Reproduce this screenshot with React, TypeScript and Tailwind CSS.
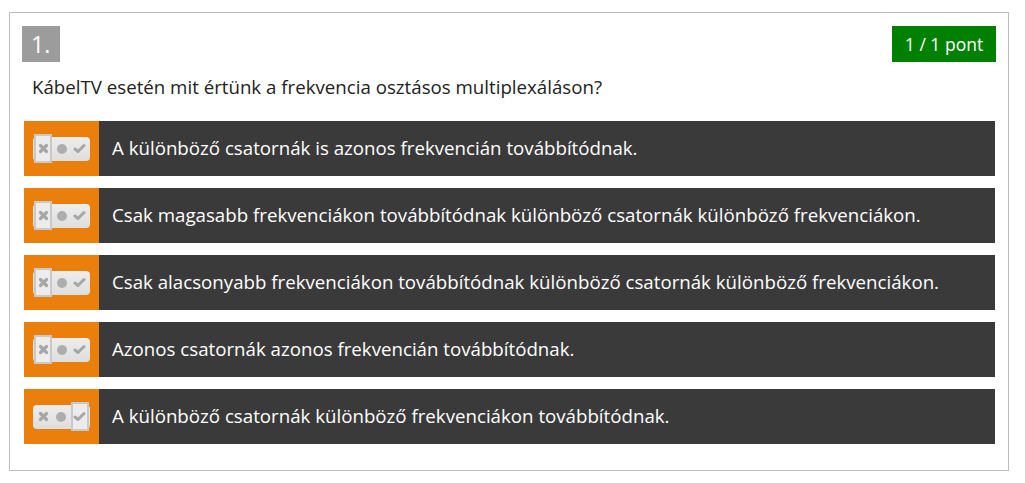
import React from 'react';

const answers = [
  { text: 'A különböző csatornák is azonos frekvencián továbbítódnak.', state: 'wrong' },
  { text: 'Csak magasabb frekvenciákon továbbítódnak különböző csatornák különböző frekvenciákon.', state: 'wrong' },
  { text: 'Csak alacsonyabb frekvenciákon továbbítódnak különböző csatornák különböző frekvenciákon.', state: 'wrong' },
  { text: 'Azonos csatornák azonos frekvencián továbbítódnak.', state: 'wrong' },
  { text: 'A különböző csatornák különböző frekvenciákon továbbítódnak.', state: 'right' },
];

const Cross = () => (
  <svg width="11" height="11" viewBox="0 0 11 11">
    <path d="M2.5 2.5 L8.5 8.5 M8.5 2.5 L2.5 8.5" stroke="#a6a6a6" strokeWidth="3.2" strokeLinecap="round" />
  </svg>
);

const Dot = () => <div className="w-[10px] h-[10px] rounded-full bg-[#adadad]" />;

const Check = () => (
  <svg width="13" height="11" viewBox="0 0 13 11">
    <path d="M2 6 L5 8.5 L11 2.5" stroke="#a6a6a6" strokeWidth="3" strokeLinecap="round" strokeLinejoin="round" fill="none" />
  </svg>
);

const Toggle: React.FC<{ state: string }> = ({ state }) => {
  const seg = (active: boolean, child: React.ReactNode) => (
    <div
      className={`w-[19px] flex items-center justify-center ${
        active ? 'h-[29px] border-2 border-[#c9c9c9] bg-[#ececec]' : 'h-[24px]'
      }`}
    >
      {child}
    </div>
  );
  return (
    <div className="relative w-[57px] h-[24px] rounded-[4px] bg-gradient-to-b from-[#ededed] to-[#dedede] flex items-center px-[1px]">
      {seg(state === 'wrong', <Cross />)}
      {seg(false, <Dot />)}
      {seg(state === 'right', <Check />)}
    </div>
  );
};

export default function App() {
  return (
    <div className="bg-white w-[1025px] h-[483px] pt-[12px] pl-[9px]" style={{ fontFamily: '"Open Sans", "Noto Sans", sans-serif' }}>
      <div className="w-[1000px] border border-[#bcbcbc] pt-[13px] pb-[26px] pl-[12px] pr-[12px]">
        <div className="flex justify-between items-start h-[36px]">
          <div className="w-[38px] h-[36px] bg-[#9c9c9c] text-white text-[23px] leading-[36px] pl-[9px]">1.</div>
          <div className="w-[104px] h-[36px] bg-[#008000] text-white text-[17.5px] leading-[36px] text-center">1 / 1 pont</div>
        </div>
        <p className="mt-[13px] mb-[22px] pl-[10px] text-[18.7px] leading-[24px] text-[#222]">
          KábelTV esetén mit értünk a frekvencia osztásos multiplexáláson?
        </p>
        <div className="flex flex-col gap-[12px] pl-[2px] pr-[1px]">
          {answers.map((a, i) => (
            <div key={i} className="flex h-[55px] bg-[#3a3a3a]">
              <div className="w-[75px] bg-[#ea7f0b] flex items-center justify-center">
                <Toggle state={a.state} />
              </div>
              <div className="flex items-center pl-[13px] text-white text-[18.7px]">{a.text}</div>
            </div>
          ))}
        </div>
      </div>
    </div>
  );
}
